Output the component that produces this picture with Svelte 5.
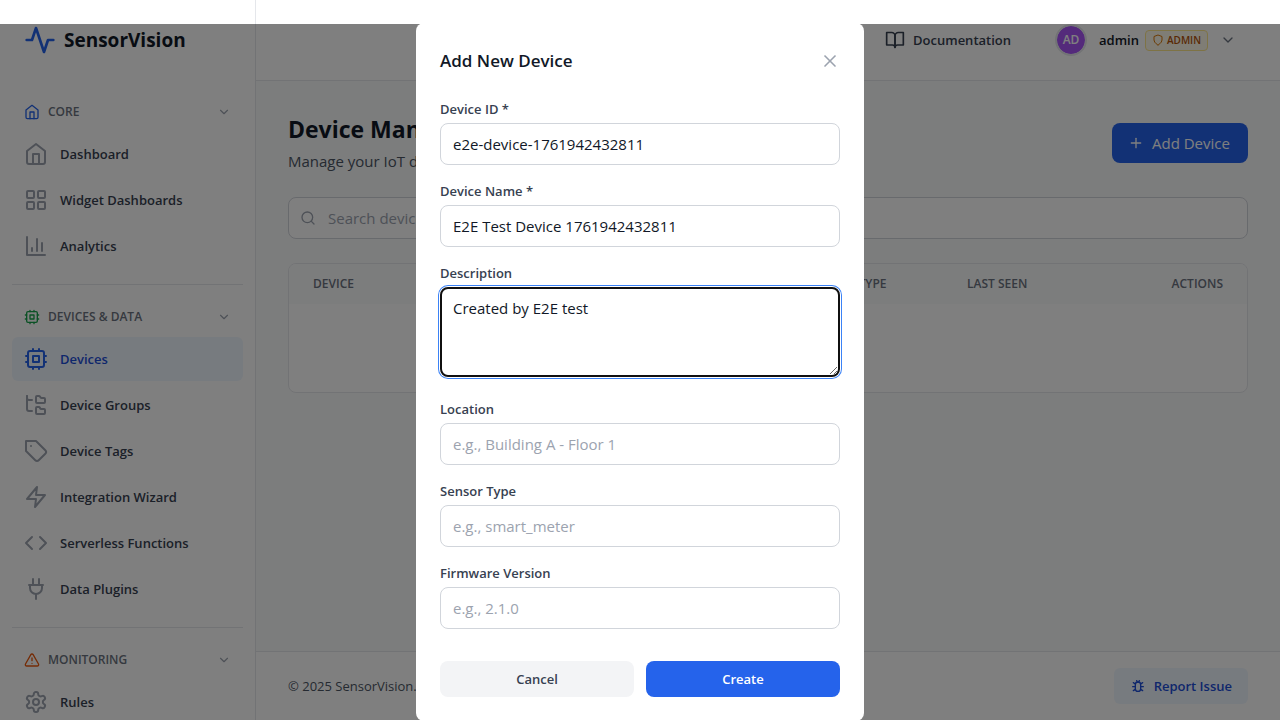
<script>
  const icons = {
    activity: '<path d="M22 12h-4l-3 9L9 3l-3 9H2"/>',
    home: '<path d="m3 9 9-7 9 7v11a2 2 0 0 1-2 2H5a2 2 0 0 1-2-2z"/><path d="M9 22V12h6v10"/>',
    grid: '<rect x="3" y="3" width="7" height="7" rx="1"/><rect x="14" y="3" width="7" height="7" rx="1"/><rect x="14" y="14" width="7" height="7" rx="1"/><rect x="3" y="14" width="7" height="7" rx="1"/>',
    chart: '<path d="M3 3v18h18"/><path d="M18 17V9"/><path d="M13 17V5"/><path d="M8 17v-3"/>',
    cpu: '<rect x="4" y="4" width="16" height="16" rx="2"/><rect x="9" y="9" width="6" height="6"/><path d="M15 2v2M15 20v2M2 15h2M2 9h2M20 15h2M20 9h2M9 2v2M9 20v2"/>',
    folders: '<path d="M13 10h7a1 1 0 0 0 1-1V6a1 1 0 0 0-1-1h-2.5a1 1 0 0 1-.8-.4l-.9-1.2A1 1 0 0 0 15 3h-2a1 1 0 0 0-1 1v5a1 1 0 0 0 1 1Z"/><path d="M13 21h7a1 1 0 0 0 1-1v-3a1 1 0 0 0-1-1h-2.88a1 1 0 0 1-.9-.55l-.44-.9a1 1 0 0 0-.9-.55H13a1 1 0 0 0-1 1v5a1 1 0 0 0 1 1Z"/><path d="M3 3v2c0 1.1.9 2 2 2h3"/><path d="M3 3v13c0 1.1.9 2 2 2h3"/>',
    tag: '<path d="M12 2H2v10l9.29 9.29c.94.94 2.48.94 3.42 0l6.58-6.58c.94-.94.94-2.48 0-3.42L12 2Z"/><path d="M7 7h.01"/>',
    zap: '<path d="M13 2 3 14h9l-1 8 10-12h-9l1-8z"/>',
    code: '<path d="m16 18 6-6-6-6"/><path d="m8 6-6 6 6 6"/>',
    plug: '<path d="M9 2v6"/><path d="M15 2v6"/><path d="M12 17v5"/><path d="M5 8h14"/><path d="M6 11V8h12v3a6 6 0 1 1-12 0Z"/>',
    alert: '<path d="m21.73 18-8-14a2 2 0 0 0-3.48 0l-8 14A2 2 0 0 0 4 21h16a2 2 0 0 0 1.73-3Z"/><path d="M12 9v4"/><path d="M12 17h.01"/>',
    gear: '<path d="M12.22 2h-.44a2 2 0 0 0-2 2v.18a2 2 0 0 1-1 1.73l-.43.25a2 2 0 0 1-2 0l-.15-.08a2 2 0 0 0-2.73.73l-.22.38a2 2 0 0 0 .73 2.73l.15.1a2 2 0 0 1 1 1.72v.51a2 2 0 0 1-1 1.74l-.15.09a2 2 0 0 0-.73 2.73l.22.38a2 2 0 0 0 2.73.73l.15-.08a2 2 0 0 1 2 0l.43.25a2 2 0 0 1 1 1.73V20a2 2 0 0 0 2 2h.44a2 2 0 0 0 2-2v-.18a2 2 0 0 1 1-1.73l.43-.25a2 2 0 0 1 2 0l.15.08a2 2 0 0 0 2.73-.73l.22-.39a2 2 0 0 0-.73-2.73l-.15-.08a2 2 0 0 1-1-1.74v-.5a2 2 0 0 1 1-1.74l.15-.09a2 2 0 0 0 .73-2.73l-.22-.38a2 2 0 0 0-2.73-.73l-.15.08a2 2 0 0 1-2 0l-.43-.25a2 2 0 0 1-1-1.73V4a2 2 0 0 0-2-2z"/><circle cx="12" cy="12" r="3"/>',
    book: '<path d="M2 3h6a4 4 0 0 1 4 4v14a3 3 0 0 0-3-3H2z"/><path d="M22 3h-6a4 4 0 0 0-4 4v14a3 3 0 0 1 3-3h7z"/>',
    shield: '<path d="M12 22s8-4 8-10V5l-8-3-8 3v7c0 6 8 10 8 10"/>',
    chevron: '<path d="m6 9 6 6 6-6"/>',
    plus: '<path d="M5 12h14"/><path d="M12 5v14"/>',
    search: '<circle cx="11" cy="11" r="8"/><path d="m21 21-4.3-4.3"/>',
    bug: '<rect x="8" y="6" width="8" height="14" rx="4"/><path d="m19 7-3 2M5 7l3 2M19 19l-3-2M5 19l3-2M20 13h-4M4 13h4M10 4l1 2M14 4l-1 2"/>',
    close: '<path d="M18 6 6 18"/><path d="m6 6 12 12"/>'
  };

  const sections = [
    {
      title: 'Core', icon: 'home', tone: 'blue',
      items: [
        { label: 'Dashboard', icon: 'home' },
        { label: 'Widget Dashboards', icon: 'grid' },
        { label: 'Analytics', icon: 'chart' }
      ]
    },
    {
      title: 'Devices & Data', icon: 'cpu', tone: 'green',
      items: [
        { label: 'Devices', icon: 'cpu', active: true },
        { label: 'Device Groups', icon: 'folders' },
        { label: 'Device Tags', icon: 'tag' },
        { label: 'Integration Wizard', icon: 'zap' },
        { label: 'Serverless Functions', icon: 'code' },
        { label: 'Data Plugins', icon: 'plug' }
      ]
    },
    {
      title: 'Monitoring', icon: 'alert', tone: 'orange',
      items: [{ label: 'Rules', icon: 'gear' }]
    }
  ];

  const columns = ['Device', 'Status', 'Location', 'Sensor Type', 'Last Seen', 'Actions'];

  let fields = $state([
    { id: 'device-id', label: 'Device ID *', value: 'e2e-device-1761942432811', hint: '' },
    { id: 'device-name', label: 'Device Name *', value: 'E2E Test Device 1761942432811', hint: '' },
    { id: 'description', label: 'Description', value: 'Created by E2E test', hint: '', multiline: true },
    { id: 'location', label: 'Location', value: '', hint: 'e.g., Building A - Floor 1' },
    { id: 'sensor-type', label: 'Sensor Type', value: '', hint: 'e.g., smart_meter' },
    { id: 'firmware', label: 'Firmware Version', value: '', hint: 'e.g., 2.1.0' }
  ]);
</script>

{#snippet icon(name, size)}
  <svg class="icon" width={size} height={size} viewBox="0 0 24 24" aria-hidden="true">{@html icons[name]}</svg>
{/snippet}

<div class="app">
  <aside class="sidebar">
    <div class="brand">{@render icon('activity', 32)}<span>SensorVision</span></div>
    <nav>
      {#each sections as section}
        <section>
          <button class="section-head {section.tone}" type="button">
            {@render icon(section.icon, 16)}
            <span>{section.title}</span>
            {@render icon('chevron', 14)}
          </button>
          <div class="items">
            {#each section.items as item}
              <a href="#top" class="item" class:active={item.active}>
                {@render icon(item.icon, 24)}<span>{item.label}</span>
              </a>
            {/each}
          </div>
        </section>
      {/each}
    </nav>
  </aside>

  <div class="page">
    <header class="topbar">
      <a class="docs" href="#docs">{@render icon('book', 20)}<span>Documentation</span></a>
      <button class="user" type="button">
        <span class="avatar">AD</span>
        <span class="who">
          <span class="name">admin</span>
          <span class="role">{@render icon('shield', 12)}ADMIN</span>
        </span>
        {@render icon('chevron', 16)}
      </button>
    </header>

    <main>
      <div class="heading">
        <div>
          <h1>Device Management</h1>
          <p>Manage your IoT devices</p>
        </div>
        <button class="add" type="button">{@render icon('plus', 16)}<span>Add Device</span></button>
      </div>
      <div class="search">
        {@render icon('search', 16)}
        <input type="text" aria-label="Search devices" placeholder="Search devices..." />
      </div>
      <div class="card">
        <table>
          <thead>
            <tr>{#each columns as column}<th scope="col">{column}</th>{/each}</tr>
          </thead>
          <tbody>
            <tr><td colspan={columns.length}></td></tr>
          </tbody>
        </table>
      </div>
    </main>

    <footer>
      <span>© 2025 SensorVision. All rights reserved.</span>
      <button class="report" type="button">{@render icon('bug', 16)}<span>Report Issue</span></button>
    </footer>
  </div>
</div>

<div class="overlay">
  <div class="modal" role="dialog" aria-modal="true" aria-labelledby="modal-title">
    <div class="modal-head">
      <h2 id="modal-title">Add New Device</h2>
      <button class="close" type="button" aria-label="Close">{@render icon('close', 20)}</button>
    </div>
    <form onsubmit={(event) => event.preventDefault()}>
      {#each fields as field}
        <div class="field" class:tall={field.multiline}>
          <label for={field.id}>{field.label}</label>
          {#if field.multiline}
            <textarea id={field.id} rows="3" bind:value={field.value}></textarea>
          {:else}
            <input id={field.id} type="text" placeholder={field.hint} bind:value={field.value} />
          {/if}
        </div>
      {/each}
      <div class="actions">
        <button class="cancel" type="button">Cancel</button>
        <button class="create" type="submit">Create</button>
      </div>
    </form>
  </div>
</div>

<style>
  :global(body) {
    margin: 0;
    overflow: hidden;
    background: #fff;
    color: #111827;
    font: 400 15px/24px "Open Sans", "Noto Sans", sans-serif;
  }
  * { box-sizing: border-box; }
  h1, h2, p { margin: 0; }
  a { color: inherit; text-decoration: none; }
  button {
    border: 0;
    padding: 0;
    background: none;
    color: inherit;
    font: inherit;
    cursor: pointer;
  }
  input, textarea { font: inherit; color: inherit; }
  .icon {
    display: block;
    flex: none;
    fill: none;
    stroke: currentColor;
    stroke-width: 2;
    stroke-linecap: round;
    stroke-linejoin: round;
  }

  .app { display: flex; height: 100vh; }

  .sidebar {
    flex: none;
    width: 256px;
    border-right: 1px solid #e5e7eb;
    background: #fff;
    overflow: hidden;
  }
  .brand {
    display: flex;
    align-items: center;
    gap: 8px;
    height: 80px;
    padding: 0 24px;
    font-size: 19px;
    font-weight: 700;
  }
  .brand .icon { color: #2563eb; }
  nav { padding: 16px 12px; }
  section + section {
    margin-top: 16px;
    padding-top: 16px;
    border-top: 1px solid #e5e7eb;
  }
  .section-head {
    display: flex;
    align-items: center;
    gap: 8px;
    width: 100%;
    height: 32px;
    padding: 0 12px;
    color: #6b7280;
    font-size: 12px;
    font-weight: 600;
    text-transform: uppercase;
  }
  .section-head span { flex: 1; text-align: left; }
  .section-head .icon:last-child { color: #9ca3af; }
  .blue .icon:first-child { color: #2563eb; }
  .green .icon:first-child { color: #16a34a; }
  .orange .icon:first-child { color: #ea580c; }
  .items { display: grid; gap: 2px; margin-top: 4px; }
  .item {
    display: flex;
    align-items: center;
    gap: 12px;
    height: 44px;
    padding: 0 12px;
    border-radius: 6px;
    color: #374151;
    font-size: 13px;
    font-weight: 600;
  }
  .item .icon { color: #9ca3af; }
  .item.active { background: #eff6ff; color: #1d4ed8; }
  .item.active .icon { color: #2563eb; }

  .page {
    flex: 1;
    min-width: 0;
    display: flex;
    flex-direction: column;
    background: #f9fafb;
  }
  .topbar {
    display: flex;
    align-items: center;
    justify-content: flex-end;
    gap: 32px;
    height: 81px;
    padding: 0 32px;
    border-bottom: 1px solid #e5e7eb;
    background: #fff;
    font-size: 13px;
    font-weight: 600;
  }
  .docs { display: flex; align-items: center; gap: 8px; color: #374151; }
  .user { display: flex; align-items: center; gap: 12px; padding: 0 12px; }
  .avatar {
    display: grid;
    place-items: center;
    width: 32px;
    height: 32px;
    border: 2px solid #e5e7eb;
    border-radius: 50%;
    background: #a855f7;
    background-clip: padding-box;
    color: #fff;
    font-size: 12px;
  }
  .who { display: flex; align-items: center; gap: 6px; }
  .role {
    display: flex;
    align-items: center;
    gap: 3px;
    height: 21px;
    padding: 0 6px;
    border: 1px solid #fde68a;
    border-radius: 4px;
    background: #fffbeb;
    color: #b45309;
    font-size: 10px;
  }
  .role .icon { color: #d97706; }
  .user > .icon { color: #6b7280; }

  main { flex: 1; padding: 32px; }
  .heading { display: flex; align-items: center; justify-content: space-between; }
  h1 { font-size: 23px; line-height: 32px; font-weight: 700; }
  .heading p { margin-top: 4px; color: #4b5563; }
  .add {
    display: flex;
    align-items: center;
    gap: 8px;
    min-width: 136px;
    height: 40px;
    padding: 0 16px;
    border-radius: 8px;
    background: #2563eb;
    color: #fff;
  }
  .search {
    display: flex;
    align-items: center;
    gap: 12px;
    height: 42px;
    margin: 24px 0;
    padding: 0 11px;
    border: 1px solid #d1d5db;
    border-radius: 8px;
    background: #fff;
    color: #9ca3af;
  }
  .search input {
    flex: 1;
    min-width: 0;
    padding: 0;
    border: 0;
    outline: 0;
    background: none;
  }
  input::placeholder { color: #9ca3af; opacity: 1; }
  .card {
    border: 1px solid #e5e7eb;
    border-radius: 8px;
    background: #fff;
    overflow: hidden;
  }
  table { width: 100%; border-collapse: collapse; table-layout: fixed; }
  thead { background: #f9fafb; }
  th {
    padding: 12px 24px;
    color: #6b7280;
    font-size: 12px;
    line-height: 16px;
    font-weight: 600;
    text-align: left;
    text-transform: uppercase;
    white-space: nowrap;
  }
  th:nth-child(4) { width: 158px; }
  th:nth-child(5) { width: 170px; }
  th:last-child { width: 134px; text-align: right; }
  td { height: 88px; padding: 0; }

  footer {
    display: flex;
    align-items: center;
    justify-content: space-between;
    padding: 16px 32px;
    border-top: 1px solid #e5e7eb;
    background: #fff;
    color: #4b5563;
    font-size: 13px;
  }
  .report {
    display: flex;
    align-items: center;
    gap: 8px;
    height: 36px;
    padding: 0 16px;
    border-radius: 6px;
    background: #eff6ff;
    color: #1d4ed8;
    font-weight: 600;
  }

  .overlay {
    position: fixed;
    inset: 24px 0 0;
    display: flex;
    align-items: center;
    justify-content: center;
    background: rgba(0, 0, 0, 0.5);
  }
  .modal {
    width: 100%;
    max-width: 448px;
    padding: 24px;
    border-radius: 8px;
    background: #fff;
  }
  .modal-head {
    display: flex;
    align-items: center;
    justify-content: space-between;
    margin-bottom: 24px;
  }
  h2 { font-size: 17px; line-height: 28px; font-weight: 600; }
  .close { color: #9ca3af; }
  form { display: grid; gap: 16px; }
  label {
    display: block;
    margin-bottom: 4px;
    color: #374151;
    font-size: 13px;
    line-height: 20px;
    font-weight: 600;
  }
  .field input, textarea {
    display: block;
    width: 100%;
    padding: 8px 12px;
    border: 1px solid #d1d5db;
    border-radius: 8px;
    background: #fff;
  }
  .field input { height: 42px; }
  textarea {
    height: 90px;
    padding: 7px 11px;
    border: 2px solid #101010;
    outline: 0;
    box-shadow: 0 0 0 1px #fff, 0 0 0 2px #3b82f6;
  }
  .tall { padding-bottom: 6px; }
  .actions {
    display: grid;
    grid-template-columns: 1fr 1fr;
    gap: 12px;
    padding-top: 16px;
  }
  .actions button {
    height: 36px;
    border-radius: 8px;
    font-size: 13px;
    font-weight: 600;
  }
  .cancel { background: #f3f4f6; color: #374151; }
  .create { background: #2563eb; color: #fff; }
</style>
